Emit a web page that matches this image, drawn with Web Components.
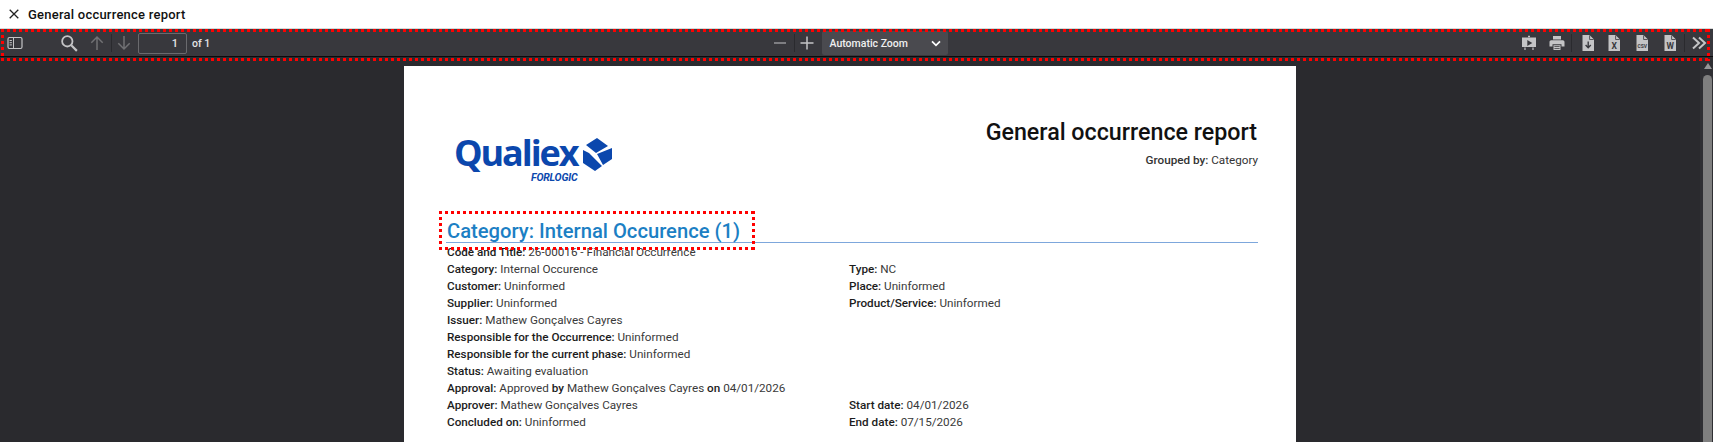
<!DOCTYPE html>
<html lang="en">
<head>
<meta charset="utf-8">
<title>General occurrence report</title>
<style>
  html, body { margin: 0; height: 100%; overflow: hidden; background: #2a2a2e; }
  body { font-family: Roboto, "Liberation Sans", sans-serif; }
  report-app { height: 442px; }
</style>
</head>
<body>
<report-app>
  <modal-title slot="title">General occurrence report</modal-title>
  <pdf-toolbar slot="toolbar"></pdf-toolbar>
  <pdf-page slot="page">
    <report-head></report-head>
    <report-group heading="Category: Internal Occurence (1)">
      <occurrence-details></occurrence-details>
    </report-group>
  </pdf-page>
</report-app>

<script>
class ReportApp extends HTMLElement {
  constructor () {
    super();
    this.attachShadow({ mode: "open" });
  }

  connectedCallback () {
    this.shadowRoot.innerHTML = /* html */ `
    <style>
      :host { display: flex; flex-direction: column; position: relative; overflow: hidden; }
      .viewer { flex: 1; min-height: 0; display: flex; background: #2a2a2e; }
      .canvas { flex: 1; min-width: 0; display: flex; justify-content: center; padding: 9px 0 0 0; }
      .scrollbar { width: 13px; background: #2f2f33; position: relative; }
      .scrollbar::before { content: ""; position: absolute; top: 6px; left: 4px; border: 4px solid transparent; border-top: 0; border-bottom: 6px solid #969696; }
      .scrollbar::after { content: ""; position: absolute; top: 18px; left: 3px; width: 9px; height: 400px; border-radius: 5px 5px 0 0; background: #7f7f7f; }
      /* square dots, 3px on and 3px off */
      .mark {
        --h: repeating-linear-gradient(90deg, #f00 0 3px, transparent 3px 6px);
        --v: repeating-linear-gradient(180deg, #f00 0 3px, transparent 3px 6px);
        position: absolute;
        pointer-events: none;
        background:
          var(--h) top / 100% 3px no-repeat,
          var(--h) bottom / 100% 3px no-repeat,
          var(--v) left / 3px 100% no-repeat,
          var(--v) right / 3px 100% no-repeat;
      }
      .mark.bar { left: 1px; top: 29px; width: 1709px; height: 32px; }
      .mark.head { left: 439px; top: 211px; width: 316px; height: 39px; }
    </style>
    <slot name="title"></slot>
    <slot name="toolbar"></slot>
    <div class="viewer">
      <div class="canvas"><slot name="page"></slot></div>
      <div class="scrollbar"></div>
    </div>
    <div class="mark bar"></div>
    <div class="mark head"></div>
    `;
  }
}

class ModalTitle extends HTMLElement {
  constructor () {
    super();
    this.attachShadow({ mode: "open" });
  }

  connectedCallback () {
    this.shadowRoot.innerHTML = /* html */ `
    <style>
      :host { display: flex; align-items: center; height: 28px; background: #fff; color: #111; font: 500 13px Roboto, sans-serif; letter-spacing: .23px; }
      svg { margin: 0 9px 0 9px; flex: none; }
    </style>
    <svg width="10" height="10" viewBox="0 0 10 10"><path d="M.7.7l8.6 8.6M9.3.7L.7 9.3" stroke="#222" stroke-width="1.3" fill="none"/></svg>
    <slot></slot>
    `;
  }
}

// paths of the pdf.js toolbar icons
const ICONS = {
  sidebar: '<rect x="1" y="2.5" width="14" height="11" rx="1.5" fill="none" stroke="currentColor" stroke-width="1.2"/><path d="M6.5 2.5v11M2.6 5.5h2.3M2.6 7.7h2.3M2.6 9.9h2.3" stroke="currentColor" fill="none"/>',
  search: '<circle cx="6.5" cy="6.5" r="4.6" fill="none" stroke="currentColor" stroke-width="1.6"/><path d="M10 10l5 5" stroke="currentColor" stroke-width="1.9"/>',
  up: '<path d="M8 15V2M2.3 7.7L8 2l5.7 5.7" fill="none" stroke="currentColor" stroke-width="1.5"/>',
  down: '<path d="M8 1v13M2.3 8.3L8 14l5.7-5.7" fill="none" stroke="currentColor" stroke-width="1.5"/>',
  minus: '<path d="M2 8h12" stroke="currentColor" stroke-width="1.5"/>',
  plus: '<path d="M1.5 8h13M8 1.5v13" stroke="currentColor" stroke-width="1.5"/>',
  present: '<path d="M1 2.5h14v1H15v8.5H1V3.5H1z" fill="currentColor"/><path d="M6.3 5l5 3-5 3z" fill="#38383d"/><path d="M7 .8h2v1.5H7zM3.4 12.5h1.2v2.5H3.4zM11.4 12.5h1.2v2.5h-1.2z" fill="currentColor"/>',
  print: '<path d="M4 1h8v3.5H4zM2.2 5.2h11.6c.9 0 1.7.8 1.7 1.7v4.6h-3V9.3h-9v2.2h-3V6.9c0-.9.8-1.7 1.7-1.7zM4.5 10.3h7V15h-7z" fill="currentColor"/><path d="M5.4 11.3h5.2v.8H5.4zM5.4 12.9h5.2v.8H5.4z" fill="#38383d"/>',
  chevrons: '<path d="M2 2.5L8 8l-6 5.5M8 2.5L14 8l-6 5.5" fill="none" stroke="currentColor" stroke-width="2"/>'
};

const fileIcon = inner => `<path d="M2.5 0H9.5L14 4.5V16H2.5z" fill="currentColor"/><path d="M9.6.4v4.1h4" fill="none" stroke="#38383d" stroke-width=".8"/>${inner}`;

ICONS.pdf = fileIcon('<path d="M8.2 6.5v6M5.6 10L8.2 12.7 10.8 10" fill="none" stroke="#38383d" stroke-width="1.4"/>');
ICONS.xls = fileIcon('<text x="8.2" y="13.8" text-anchor="middle" font-family="Roboto" font-weight="700" font-size="8.5" fill="#38383d">X</text>');
ICONS.csv = fileIcon('<text x="8.2" y="12.6" text-anchor="middle" font-family="Roboto" font-weight="700" font-size="5" fill="#38383d">CSV</text>');
ICONS.doc = fileIcon('<text x="8.2" y="13.8" text-anchor="middle" font-family="Roboto" font-weight="700" font-size="8.5" fill="#38383d">W</text>');

class ToolIcon extends HTMLElement {
  constructor () {
    super();
    this.attachShadow({ mode: "open" });
  }

  connectedCallback () {
    const nombre = this.getAttribute('name');
    const size = this.getAttribute('size') || 16;
    this.shadowRoot.innerHTML = /* html */ `
    <style>
      :host { display: flex; align-items: center; justify-content: center; width: 28px; height: 24px; color: #c4c4c6; flex: none; }
      :host([dim]) { color: #717174; }
      :host([name="minus"]) { color: #96969a; }
      :host([name="pdf"]) { margin: 0 -2px 0 2px; }
      svg { display: block; }
    </style>
    <svg width="${size}" height="${size}" viewBox="0 0 16 16">${ICONS[nombre]}</svg>
    `;
  }
}

class PdfToolbar extends HTMLElement {
  constructor () {
    super();
    this.attachShadow({ mode: "open" });
  }

  connectedCallback () {
    this.shadowRoot.innerHTML = /* html */ `
    <style>
      :host { display: grid; grid-template-columns: 1fr auto 1fr; align-items: center; height: 29px; box-sizing: border-box; padding-top: 1px; background: #38383d; border-top: 1px solid #d8d8d8; border-bottom: 1px solid #0c0c0d; color: #e4e4e6; font: 500 10px Roboto, sans-serif; }
      .left, .mid, .right { display: flex; align-items: center; }
      .right { justify-content: flex-end; }
      .sep { width: 1px; height: 18px; background: #2a2a2e; flex: none; }
      .left .sep { margin-right: -2px; }
      .mid .sep { margin-right: -2px; }
      .page { width: 49px; height: 21px; box-sizing: border-box; border: 1px solid #6a6a6e; border-radius: 2px; text-align: right; padding: 2px 8px 0 0; font-size: 11px; line-height: 16px; }
      .of { margin-left: 5px; font-size: 10.5px; }
      .zoom { display: flex; align-items: center; justify-content: space-between; width: 126px; height: 24px; box-sizing: border-box; padding: 0 7px 0 8px; margin-left: 1px; background: #4a4a4f; border-radius: 2px; color: #f0f0f0; font-size: 10.5px; }
      .left tool-icon:first-child { margin-left: 1px; margin-right: 26px; }
      .mid { margin-left: 0; }
    </style>
    <div class="left">
      <tool-icon name="sidebar"></tool-icon>
      <tool-icon name="search" size="18"></tool-icon>
      <tool-icon name="up" dim></tool-icon>
      <span class="sep"></span>
      <tool-icon name="down" dim></tool-icon>
      <span class="page">1</span>
      <span class="of">of 1</span>
    </div>
    <div class="mid">
      <tool-icon name="minus"></tool-icon>
      <span class="sep"></span>
      <tool-icon name="plus"></tool-icon>
      <span class="zoom">Automatic Zoom
        <svg width="10" height="7" viewBox="0 0 10 7"><path d="M1 1.3l4 4 4-4" fill="none" stroke="#fff" stroke-width="1.7"/></svg>
      </span>
    </div>
    <div class="right">
      <tool-icon name="present"></tool-icon>
      <tool-icon name="print"></tool-icon>
      <span class="sep"></span>
      <tool-icon name="pdf"></tool-icon>
      <tool-icon name="xls"></tool-icon>
      <tool-icon name="csv"></tool-icon>
      <tool-icon name="doc"></tool-icon>
      <span class="sep"></span>
      <tool-icon name="chevrons"></tool-icon>
    </div>
    `;
  }
}

class PdfPage extends HTMLElement {
  constructor () {
    super();
    this.attachShadow({ mode: "open" });
  }

  connectedCallback () {
    this.shadowRoot.innerHTML = /* html */ `
    <style>
      :host { display: block; width: 892px; height: 500px; box-sizing: border-box; padding: 50px 38px 0 42px; background: #fff; color: #222; font: 400 11.7px Roboto, sans-serif; }
    </style>
    <slot></slot>
    `;
  }
}

class ReportHead extends HTMLElement {
  constructor () {
    super();
    this.attachShadow({ mode: "open" });
  }

  connectedCallback () {
    this.shadowRoot.innerHTML = /* html */ `
    <style>
      :host { display: flex; justify-content: space-between; align-items: flex-start; height: 100px; }
      .logo { display: flex; align-items: flex-start; margin: 19px 0 0 8px; color: #0b47ad; }
      .brand { display: flex; flex-direction: column; align-items: flex-end; }
      .word { font: 700 36px/36px "Open Sans", sans-serif; letter-spacing: -2.1px; }
      .sub { font: italic 700 10.5px/11px Roboto, sans-serif; letter-spacing: -.2px; margin-top: 1px; }
      svg { margin: 3px 0 0 5px; }
      .titles { text-align: right; color: #111; margin: 2px 1px 0 0; }
      h1 { margin: 0; font: 500 23.25px/28px Roboto, sans-serif; }
      p { margin: 7px -1px 0 0; font-size: 11.7px; line-height: 14px; color: #333; }
      b { font-weight: 500; }
    </style>
    <div class="logo">
      <div class="brand"><span class="word">Qualiex</span><span class="sub">FORLOGIC</span></div>
      <svg width="31" height="34" viewBox="0 0 31 34"><path d="M4 7L15 0l11 8-12 7zM30 10v11l-9 6-6-11zM1 12v13l12 8 7-5L7 15z" fill="currentColor"/></svg>
    </div>
    <div class="titles">
      <h1>General occurrence report</h1>
      <p><b>Grouped by:</b> Category</p>
    </div>
    `;
  }
}

class ReportGroup extends HTMLElement {
  constructor () {
    super();
    this.attachShadow({ mode: "open" });
  }

  connectedCallback () {
    this.shadowRoot.innerHTML = /* html */ `
    <style>
      :host { display: block; }
      h2 { margin: 0 0 1px 0; padding: 4px 0 0 1px; font: 500 20.2px/22px Roboto, sans-serif; color: #1c7fc4; border-bottom: 1px solid #7da7dc; }
    </style>
    <h2>${this.getAttribute('heading')}</h2>
    <slot></slot>
    `;
  }
}

class OccurrenceDetails extends HTMLElement {
  constructor () {
    super();
    this.attachShadow({ mode: "open" });
  }

  connectedCallback () {
    const filas = [
      ['Code and Title', '26-00016 - Financial Occurrence'],
      ['Category', 'Internal Occurence', 'Type', 'NC'],
      ['Customer', 'Uninformed', 'Place', 'Uninformed'],
      ['Supplier', 'Uninformed', 'Product/Service', 'Uninformed'],
      ['Issuer', 'Mathew Gonçalves Cayres'],
      ['Responsible for the Occurrence', 'Uninformed'],
      ['Responsible for the current phase', 'Uninformed'],
      ['Status', 'Awaiting evaluation'],
      ['Approval', 'Approved <b>by</b> Mathew Gonçalves Cayres <b>on</b> 04/01/2026'],
      ['Approver', 'Mathew Gonçalves Cayres', 'Start date', '04/01/2026'],
      ['Concluded on', 'Uninformed', 'End date', '07/15/2026']
    ];
    const campo = (k, v) => k ? `<span><b>${k}:</b> ${v}</span>` : '<span></span>';
    this.shadowRoot.innerHTML = /* html */ `
    <style>
      :host { display: grid; grid-template-columns: 402px 1fr; grid-auto-rows: 17px; padding-left: 1px; font-size: 11.7px; line-height: 17px; color: #3a3a3a; }
      b { font-weight: 500; color: #1c1c1c; }
      span { white-space: nowrap; }
    </style>
    ${filas.map(f => campo(f[0], f[1]) + campo(f[2], f[3])).join('')}
    `;
  }
}

customElements.define("report-app", ReportApp);
customElements.define("modal-title", ModalTitle);
customElements.define("tool-icon", ToolIcon);
customElements.define("pdf-toolbar", PdfToolbar);
customElements.define("pdf-page", PdfPage);
customElements.define("report-head", ReportHead);
customElements.define("report-group", ReportGroup);
customElements.define("occurrence-details", OccurrenceDetails);
</script>
</body>
</html>
